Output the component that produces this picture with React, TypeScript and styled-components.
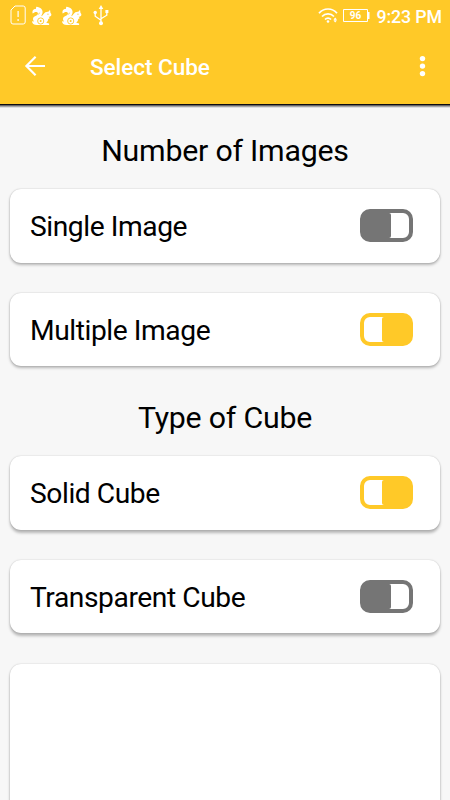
import React from 'react';
import styled, { createGlobalStyle } from 'styled-components';

const YELLOW = '#ffc928';
const GREY = '#757575';

const GlobalStyle = createGlobalStyle`
  * { box-sizing: border-box; }
  body { margin: 0; background: #f7f7f7; font-family: Roboto, "Liberation Sans", sans-serif; }
`;

const Screen = styled.div`
  width: 450px;
  height: 800px;
  overflow: hidden;
  display: flex;
  flex-direction: column;
  background: #f7f7f7;
  color: #000;
`;

const Header = styled.header`
  flex: none;
  height: 104px;
  background: ${YELLOW};
  box-shadow: 0 1px 0 #0c0c12, 0 2px 0 #66666a, 0 3px 0 #a5a5a7, 0 4px 0 #dededf;
  color: #fff;
`;

const StatusBar = styled.div`
  height: 32px;
  display: flex;
  align-items: center;
  justify-content: space-between;
  padding-right: 8px;
`;

const StatusGroup = styled.div`
  display: flex;
  align-items: center;
`;

const Clock = styled.span`
  margin-left: 6px;
  padding-top: 1px;
  font-size: 17.8px;
  letter-spacing: -0.1px;
  font-weight: 500;
  line-height: 32px;
  white-space: nowrap;
`;

const Toolbar = styled.div`
  height: 72px;
  display: flex;
  align-items: center;
  padding: 0 15px 4px 23px;
`;

const IconButton = styled.button`
  display: flex;
  padding: 0;
  border: 0;
  background: none;
  color: inherit;
`;

const Title = styled.h1`
  flex: 1;
  margin: 0 0 0 43px;
  padding-top: 3px;
  font-size: 22.6px;
  letter-spacing: -0.08px;
  line-height: 28px;
  font-weight: 500;
`;

const Main = styled.main`
  flex: 1;
  min-height: 0;
  display: flex;
  flex-direction: column;
  padding: 28.5px 10px 0;
`;

const Section = styled.section`
  flex: none;
  display: flex;
  flex-direction: column;
  gap: 30px;
  padding-bottom: 33.5px;
`;

const Heading = styled.h2`
  margin: 0 0 -9.5px;
  height: 36px;
  font-size: 30.3px;
  letter-spacing: -0.22px;
  line-height: 36px;
  font-weight: 400;
  text-align: center;
`;

const Card = styled.div<{ $lift: number }>`
  height: 73.5px;
  flex: none;
  display: flex;
  align-items: center;
  justify-content: space-between;
  padding: 0 27px 0 20px;
  border-radius: 11px;
  background: #fff;
  box-shadow: 0 0 1.5px rgba(0, 0, 0, 0.25),
    0 ${(p) => p.$lift}px 3px rgba(0, 0, 0, 0.26);
`;

const Preview = styled(Card)`
  height: 200px;
  margin-top: -3px;
`;

const Label = styled.span`
  font-size: 28.2px;
  letter-spacing: -0.43px;
  line-height: 34px;
  padding-top: 3px;
  white-space: nowrap;
`;

const Track = styled.button<{ $on: boolean }>`
  width: 53px;
  height: 33px;
  padding: 0;
  display: flex;
  justify-content: ${(p) => (p.$on ? 'flex-end' : 'flex-start')};
  border: 4px solid ${(p) => (p.$on ? YELLOW : GREY)};
  border-radius: 10px;
  background: #fff;
`;

const Thumb = styled.span<{ $on: boolean }>`
  width: 27px;
  height: 25px;
  border-radius: ${(p) => (p.$on ? '2px 0 0 2px' : '0 2px 2px 0')};
  background: ${(p) => (p.$on ? YELLOW : GREY)};
`;

const Squirrel = () => (
  <svg width="30" height="32" viewBox="0 0 30 32" fill="#fff">
    <path d="M6.3 6.7C10.6 7 13.2 9.6 12.5 13c-.2 1.2-1 2-1.2 3.2 1.8-.9 2.4-2.9 4-4l3.4-.7 1.3-1.7.5 3.2c1.7 1.6.8 3.6-1.8 3.8l1 1.4-1.5.8c0 1.6-.8 2.8-2 3.8l2.9.8v1.5H7C3.8 25.1 2 23.4 2 21.2l2 .3c-1.8-2.3-1-4.8 2-5.7 2.1-.9 2.6-2.6 1.2-3.5-1.5-.8-3 .1-4.5 1.2C1.8 10.9 3.4 9 5.8 9.1z" />
    <circle cx="10.7" cy="21" r="3.1" fill="none" stroke={YELLOW} strokeWidth=".9" />
    <circle cx="10.7" cy="21" r="1" fill={YELLOW} />
    <path d="M17.2 14.2h1.5M8.5 14.5l1-1.8" fill="none" stroke={YELLOW} strokeWidth=".8" />
  </svg>
);

const SimIcon = () => (
  <svg width="30" height="32" viewBox="0 0 30 32" fill="none" stroke="#fff">
    <path d="M15 6h8.2q2 0 2 2v14q0 2-2 2H13q-2 0-2-2V10z" strokeWidth="1" />
    <path d="M18.1 11v6M18.1 19v2" strokeWidth="1.2" />
  </svg>
);

const UsbIcon = () => (
  <svg width="30" height="32" viewBox="0 0 30 32" fill="none" stroke="#fff" strokeWidth="1.3">
    <path d="M11 8v15M5.2 13v3.2L11 20.3M16.8 12v3.2L11 18.7" />
    <path d="M11 5l2.3 4H8.7zM15.4 10h3v3h-3z" fill="#fff" stroke="none" />
    <circle cx="5.2" cy="12.5" r="1.7" fill="#fff" stroke="none" />
    <circle cx="11" cy="23.3" r="2" fill="#fff" stroke="none" />
  </svg>
);

const WifiIcon = () => (
  <svg width="24" height="32" viewBox="0 0 24 32" fill="none" stroke="#fff" strokeWidth="1.7">
    <path d="M1 13.2c4.6-5.6 13.4-5.6 18 0M4 16.5c3.2-3.6 8.8-3.6 12 0M7 19.5c1.7-1.8 4.3-1.8 6 0" />
    <circle cx="10" cy="21.5" r="1.3" fill="#fff" stroke="none" />
    <path d="M15.5 19.5l1.7-2 1.7 2-1.7.8zM15.5 20.5l1.7 2 1.7-2-1.7-.8z" fill="#fff" stroke="none" />
  </svg>
);

const Battery = () => (
  <svg width="28" height="32" viewBox="0 0 28 32">
    <path d="M1.5 9.5h24v12h-24z" fill="none" stroke="#fff" />
    <path d="M26 12h1.5v7H26z" fill="#fff" />
    <text x="13.6" y="19.2" textAnchor="middle" fill="#fff" fontFamily="Roboto, sans-serif" fontSize="10" fontWeight="700">96</text>
  </svg>
);

const BackIcon = () => (
  <svg width="24" height="24" viewBox="0 0 24 24" fill="none" stroke="#fff" strokeWidth="2.2">
    <path d="M12.6 2.8L3.4 12l9.2 9.2M3.5 12H22" />
  </svg>
);

const MoreIcon = () => (
  <svg width="24" height="24" viewBox="0 0 24 24" fill="#fff">
    <circle cx="11.5" cy="4.6" r="2.7" />
    <circle cx="11.5" cy="12.1" r="2.7" />
    <circle cx="11.5" cy="19.6" r="2.7" />
  </svg>
);

const Option = ({ label, on = false, lift = 2 }: { label: string; on?: boolean; lift?: number }) => (
  <Card $lift={lift}>
    <Label>{label}</Label>
    <Track $on={on} role="switch" aria-checked={on} aria-label={label}>
      <Thumb $on={on} />
    </Track>
  </Card>
);

export default function App() {
  return (
    <Screen>
      <GlobalStyle />
      <Header>
        <StatusBar>
          <StatusGroup>
            <SimIcon />
            <Squirrel />
            <Squirrel />
            <UsbIcon />
          </StatusGroup>
          <StatusGroup>
            <WifiIcon />
            <Battery />
            <Clock>9:23 PM</Clock>
          </StatusGroup>
        </StatusBar>
        <Toolbar>
          <IconButton aria-label="Back"><BackIcon /></IconButton>
          <Title>Select Cube</Title>
          <IconButton aria-label="More options"><MoreIcon /></IconButton>
        </Toolbar>
      </Header>
      <Main>
        <Section>
          <Heading>Number of Images</Heading>
          <Option label="Single Image" />
          <Option label="Multiple Image" on />
        </Section>
        <Section>
          <Heading>Type of Cube</Heading>
          <Option label="Solid Cube" on lift={3} />
          <Option label="Transparent Cube" lift={3} />
        </Section>
        <Preview $lift={3} />
      </Main>
    </Screen>
  );
}
